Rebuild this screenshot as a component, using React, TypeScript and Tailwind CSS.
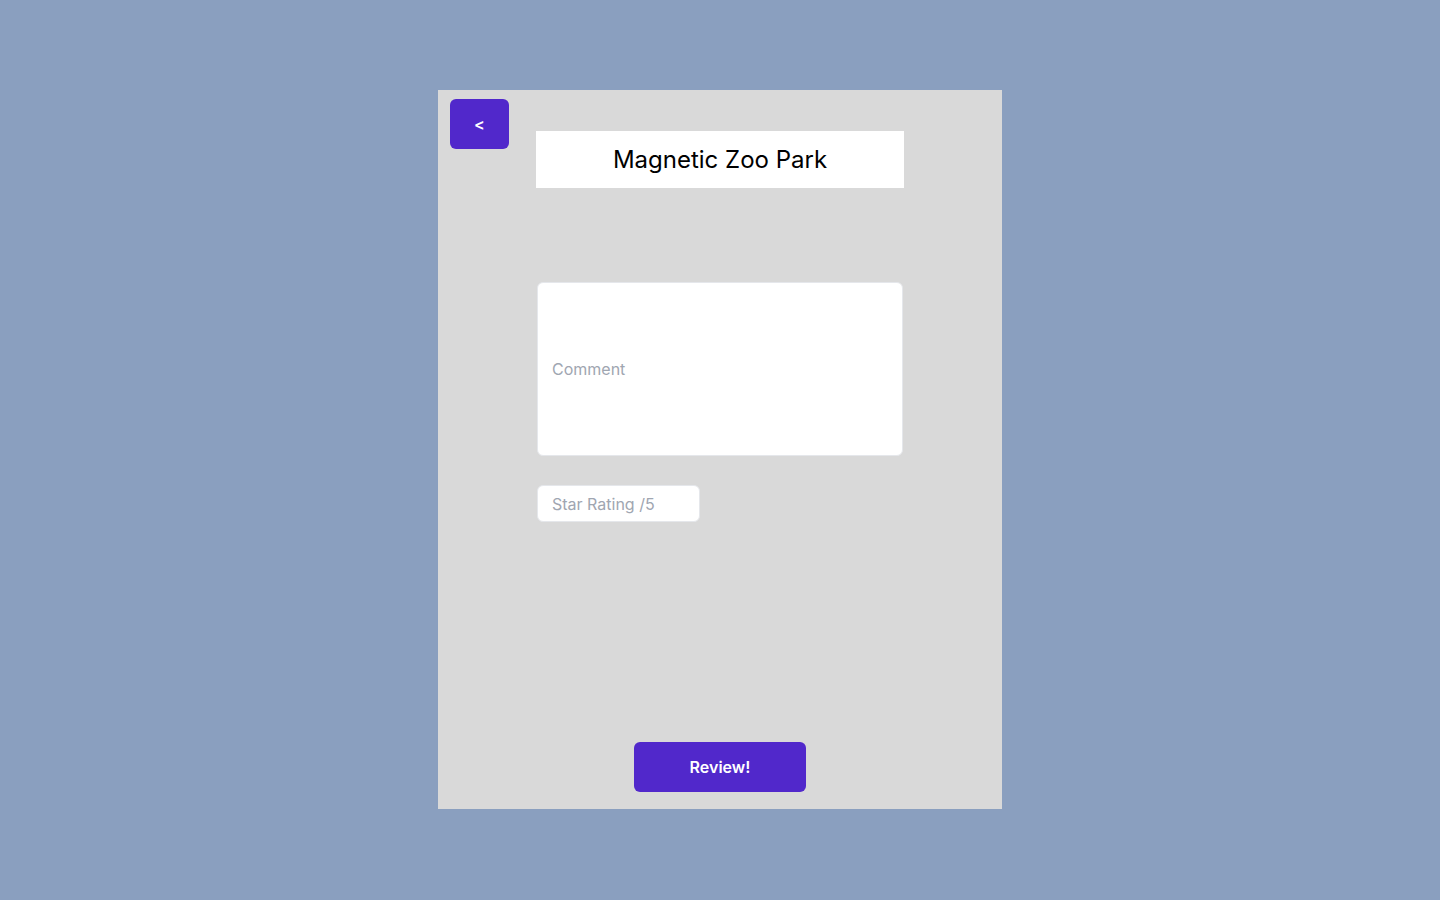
export default function App() {
    return (
        <div className="min-h-screen w-full bg-[#8a9fbf] flex justify-center pt-[90px] font-['Inter',sans-serif]">
            <div className="w-[564px] h-[719px] bg-[#d9d9d9] flex flex-col pt-[9px] pb-[17px]">
                <div className="grid grid-cols-[86px_368px_86px] px-[12px]">
                    <button className="w-[59px] h-[50px] rounded-[6px] bg-[#5128cb] text-white text-base font-semibold flex items-center justify-center">
                        &lt;
                    </button>
                    <div className="mt-[32px] h-[57px] bg-white flex items-center justify-center text-2xl text-black">
                        Magnetic Zoo Park
                    </div>
                </div>

                <div className="w-[366px] ml-[99px] mt-[94px] flex flex-col">
                    <input
                        type="text"
                        placeholder="Comment"
                        className="h-[174px] w-full rounded-[6px] bg-white border border-[#e5e7eb] px-[14px] text-base placeholder:text-[#a0a6b1] outline-none"
                    />
                    <input
                        type="text"
                        placeholder="Star Rating /5"
                        className="mt-[29px] h-[37px] w-[163px] rounded-[6px] bg-white border border-[#e5e7eb] px-[14px] text-base placeholder:text-[#a0a6b1] outline-none"
                    />
                </div>

                <div className="flex-1" />

                <div className="flex justify-center">
                    <button className="w-[172px] h-[50px] rounded-[6px] bg-[#5128cb] text-white text-base font-semibold">
                        Review!
                    </button>
                </div>
            </div>
        </div>
    );
}
